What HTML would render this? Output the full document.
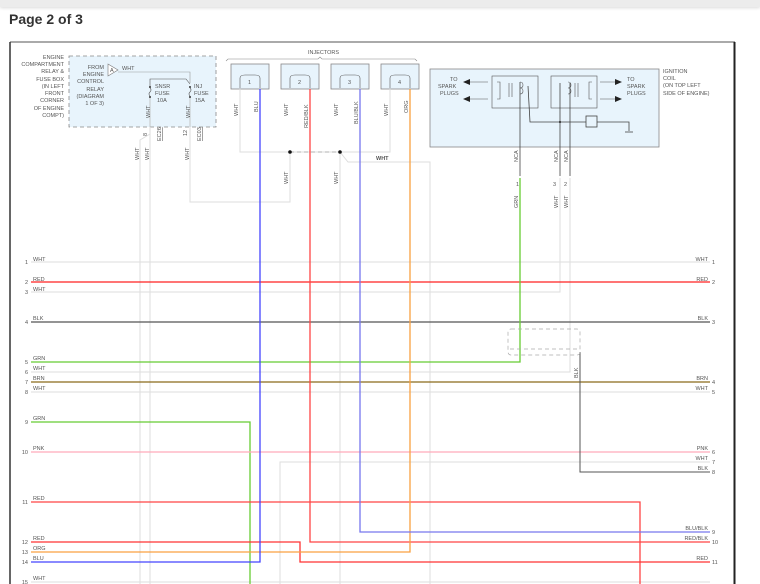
<!DOCTYPE html>
<html><head><meta charset="utf-8"><style>
html,body{margin:0;padding:0;background:#fff;width:760px;height:584px;overflow:hidden}
.top{position:absolute;left:0;top:0;width:760px;height:7px;background:#ececec;box-shadow:0 1px 3px rgba(0,0,0,.15)}
h1{position:absolute;left:9px;top:11px;margin:0;font:bold 14px "Liberation Sans",sans-serif;color:#333}
svg{position:absolute;left:0;top:0}
text{font-family:"Liberation Sans",sans-serif;font-size:5.5px;fill:#555}
</style></head><body>
<div class="top"></div>
<h1>Page 2 of 3</h1>
<svg width="760" height="584" viewBox="0 0 760 584">
<!-- frame -->
<line x1="10" y1="42" x2="735" y2="42" stroke="#555" stroke-width="1"/>
<line x1="10" y1="42" x2="10" y2="584" stroke="#333" stroke-width="1.5"/>
<line x1="734.5" y1="42" x2="734.5" y2="584" stroke="#222" stroke-width="2"/>

<!-- fuse box -->
<rect x="69" y="56" width="147" height="71" fill="#e8f4fc" stroke="#888" stroke-dasharray="4,3" stroke-width="0.8"/>
<g text-anchor="end">
<text x="64" y="59">ENGINE</text><text x="64" y="66">COMPARTMENT</text><text x="64" y="73">RELAY &amp;</text><text x="64" y="81">FUSE BOX</text><text x="64" y="88">(IN LEFT</text><text x="64" y="95">FRONT</text><text x="64" y="102">CORNER</text><text x="64" y="110">OF ENGINE</text><text x="64" y="117">COMPT)</text>
<text x="104" y="69">FROM</text><text x="104" y="76">ENGINE</text><text x="104" y="83">CONTROL</text><text x="104" y="91">RELAY</text><text x="104" y="98">(DIAGRAM</text><text x="104" y="105">1 OF 3)</text>
</g>
<polygon points="108,64 108,76 118,70" fill="#fff" stroke="#777" stroke-width="0.6"/><text x="110" y="72" font-size="5">A</text>
<text x="122" y="70">WHT</text>
<polyline points="118,72 190,72 190,83" fill="none" stroke="#999" stroke-width="0.6"/>
<polyline points="150,88 150,79 186,79 190,84" fill="none" stroke="#555" stroke-width="0.6"/>
<text x="155" y="88">SNSR</text><text x="155" y="95">FUSE</text><text x="157" y="102">10A</text>
<text x="194" y="88">INJ</text><text x="194" y="95">FUSE</text><text x="195" y="102">15A</text>
<circle cx="150" cy="87" r="1" fill="#333"/><circle cx="150" cy="97" r="1" fill="#333"/>
<circle cx="190" cy="87" r="1" fill="#333"/><circle cx="190" cy="97" r="1" fill="#333"/>
<path d="M150,88 q2,2 0,4 q-2,2 0,4" fill="none" stroke="#555" stroke-width="0.6"/>
<path d="M190,88 q2,2 0,4 q-2,2 0,4" fill="none" stroke="#555" stroke-width="0.6"/>
<line x1="150" y1="98" x2="150" y2="127" stroke="#bbb" stroke-width="0.8"/>
<line x1="190" y1="98" x2="190" y2="127" stroke="#bbb" stroke-width="0.8"/>
<text transform="translate(150,118) rotate(-90)">WHT</text>
<text transform="translate(190,118) rotate(-90)">WHT</text>
<text transform="translate(147,136) rotate(-90)">8</text><text transform="translate(187,136) rotate(-90)">12</text>
<text transform="translate(161,141) rotate(-90)" text-decoration="underline">EC26</text>
<text transform="translate(201,141) rotate(-90)" text-decoration="underline">EC03</text>
<text transform="translate(139,160) rotate(-90)">WHT</text>
<text transform="translate(149,160) rotate(-90)">WHT</text>
<text transform="translate(189,160) rotate(-90)">WHT</text>

<!-- injectors -->
<text x="308" y="54">INJECTORS</text>
<path d="M226,61 l2,-2 L318,59 l2,-2 l2,2 L415,59 l2,2" fill="none" stroke="#888" stroke-width="0.6"/>
<g fill="#e8f4fc" stroke="#888" stroke-width="0.8">
<rect x="231" y="64" width="38" height="25"/><rect x="281" y="64" width="38" height="25"/><rect x="331" y="64" width="38" height="25"/><rect x="381" y="64" width="38" height="25"/>
</g>
<g fill="none" stroke="#555" stroke-width="0.6">
<path d="M240,88 v-10 q0,-3 5,-3 h10 q5,0 5,3 v10"/><path d="M290,88 v-10 q0,-3 5,-3 h10 q5,0 5,3 v10"/><path d="M340,88 v-10 q0,-3 5,-3 h10 q5,0 5,3 v10"/><path d="M390,88 v-10 q0,-3 5,-3 h10 q5,0 5,3 v10"/>
</g>
<text x="248" y="84">1</text><text x="298" y="84">2</text><text x="348" y="84">3</text><text x="398" y="84">4</text>
<text transform="translate(238,116) rotate(-90)">WHT</text><text transform="translate(258,112) rotate(-90)">BLU</text>
<text transform="translate(288,116) rotate(-90)">WHT</text><text transform="translate(308,128) rotate(-90)">RED/BLK</text>
<text transform="translate(338,116) rotate(-90)">WHT</text><text transform="translate(358,124) rotate(-90)">BLU/BLK</text>
<text transform="translate(388,116) rotate(-90)">WHT</text><text transform="translate(408,113) rotate(-90)">ORG</text>
<text transform="translate(288,184) rotate(-90)">WHT</text><text transform="translate(338,184) rotate(-90)">WHT</text>
<text x="376" y="160" font-weight="bold" fill="#333">WHT</text>

<!-- coil -->
<rect x="430" y="69" width="229" height="78" fill="#e8f4fc" stroke="#888" stroke-width="0.8"/>
<text x="450" y="81">TO</text><text x="438" y="88">SPARK</text><text x="440" y="95">PLUGS</text>
<text x="627" y="81">TO</text><text x="627" y="88">SPARK</text><text x="627" y="95">PLUGS</text>
<text x="663" y="73">IGNITION</text><text x="663" y="80">COIL</text><text x="663" y="87">(ON TOP LEFT</text><text x="663" y="95">SIDE OF ENGINE)</text>
<g fill="none" stroke="#555" stroke-width="0.6">
<rect x="492" y="76" width="46" height="32"/><rect x="551" y="76" width="46" height="32"/>
<path d="M488,82 H470 M488,99 H470 M600,82 H615 M600,99 H615"/>
<path d="M497,82 h3 v17 h-3"/><path d="M592,82 h-3 v17 h3"/>
<line x1="509" y1="83" x2="509" y2="97"/><line x1="512" y1="83" x2="512" y2="97"/>
<line x1="575" y1="83" x2="575" y2="97"/><line x1="578" y1="83" x2="578" y2="97"/>
<path d="M520,82 q3,0 3,3 q0,3 -3,3 q3,0 3,3 q0,3 -3,3" /><path d="M568,82 q3,0 3,3 q0,3 -3,3 q3,0 3,3 q0,3 -3,3"/>
</g>
<polygon points="463,82 470,79 470,85" fill="#222"/><polygon points="463,99 470,96 470,102" fill="#222"/>
<polygon points="622,82 615,79 615,85" fill="#222"/><polygon points="622,99 615,96 615,102" fill="#222"/>
<g fill="none" stroke="#444" stroke-width="0.8">
<polyline points="520,82 520,176"/><polyline points="528,86 530,122 586,122"/><polyline points="560,83 560,176"/><polyline points="570,83 570,176"/>
<rect x="586" y="116" width="11" height="11"/><polyline points="597,122 629,122 629,131"/>
<line x1="625" y1="132" x2="633" y2="132"/>
</g>
<circle cx="560" cy="122" r="1" fill="#222"/>
<text transform="translate(518,162) rotate(-90)">NCA</text><text transform="translate(558,162) rotate(-90)">NCA</text><text transform="translate(568,162) rotate(-90)">NCA</text>
<text x="516" y="186">1</text><text x="553" y="186">3</text><text x="564" y="186">2</text>
<text transform="translate(518,208) rotate(-90)">GRN</text><text transform="translate(558,208) rotate(-90)">WHT</text><text transform="translate(568,208) rotate(-90)">WHT</text>

<!-- light gray wires -->
<g fill="none" stroke="#ddd" stroke-width="1">
<polyline points="150,127 150,134 140,140 140,584"/>
<polyline points="150,127 150,584"/>
<polyline points="190,127 190,202 290,202 290,152"/>
<polyline points="240,89 240,152 390,152 390,89"/>
<polyline points="340,152 340,584"/>
<polyline points="340,152 348,162 430,162 430,584"/>
<polyline points="280,584 280,462 710,462"/>
<polyline points="560,178 560,292 31,292"/>
<polyline points="570,178 570,372 31,372"/>
<line x1="31" y1="262" x2="710" y2="262"/>
<line x1="31" y1="392" x2="710" y2="392"/>
<line x1="31" y1="582" x2="710" y2="582"/>
</g>
<line x1="290" y1="152" x2="340" y2="152" stroke="#888" stroke-dasharray="4,3" stroke-width="0.6"/>
<circle cx="290" cy="152" r="1.8" fill="#111"/><circle cx="340" cy="152" r="1.8" fill="#111"/>

<!-- colored wires -->
<g fill="none" stroke-width="1.3">
<line x1="31" y1="282" x2="710" y2="282" stroke="#f22"/>
<line x1="31" y1="322" x2="710" y2="322" stroke="#555"/>
<polyline points="520,178 520,362 31,362" stroke="#6c3"/>
<line x1="31" y1="382" x2="710" y2="382" stroke="#8a6a1a"/>
<polyline points="31,422 250,422 250,584" stroke="#6c3"/>
<line x1="31" y1="452" x2="710" y2="452" stroke="#fab"/>
<polyline points="31,502 640,502 640,584" stroke="#f44"/>
<polyline points="310,89 310,542 710,542" stroke="#f44"/>
<polyline points="31,542 300,542 300,562 710,562" stroke="#f33"/>
<polyline points="410,89 410,552 31,552" stroke="#f9a040"/>
<polyline points="260,89 260,562 31,562" stroke="#44f"/>
<polyline points="360,89 360,532 710,532" stroke="#77e"/>
<polyline points="580,352 580,472 710,472" stroke="#555" stroke-width="1"/>
</g>
<rect x="508" y="329" width="72" height="26" rx="3" fill="none" stroke="#aaa" stroke-dasharray="4,3" stroke-width="0.7"/>
<line x1="510" y1="349" x2="578" y2="349" stroke="#aaa" stroke-dasharray="4,3" stroke-width="0.7"/>
<text transform="translate(578,378) rotate(-90)" fill="#333">BLK</text>

<!-- left labels -->
<g>
<text x="33" y="261">WHT</text><text x="33" y="281">RED</text><text x="33" y="291">WHT</text><text x="33" y="320">BLK</text>
<text x="33" y="360">GRN</text><text x="33" y="370">WHT</text><text x="33" y="380">BRN</text><text x="33" y="390">WHT</text>
<text x="33" y="420">GRN</text><text x="33" y="450">PNK</text><text x="33" y="500">RED</text>
<text x="33" y="540">RED</text><text x="33" y="550">ORG</text><text x="33" y="560">BLU</text><text x="33" y="580">WHT</text>
</g>
<g text-anchor="end">
<text x="28" y="264">1</text><text x="28" y="284">2</text><text x="28" y="294">3</text><text x="28" y="324">4</text>
<text x="28" y="364">5</text><text x="28" y="374">6</text><text x="28" y="384">7</text><text x="28" y="394">8</text>
<text x="28" y="424">9</text><text x="28" y="454">10</text><text x="28" y="504">11</text>
<text x="28" y="544">12</text><text x="28" y="554">13</text><text x="28" y="564">14</text><text x="28" y="584">15</text>
<text x="708" y="261">WHT</text><text x="708" y="281">RED</text><text x="708" y="320">BLK</text>
<text x="708" y="380">BRN</text><text x="708" y="390">WHT</text><text x="708" y="450">PNK</text><text x="708" y="460">WHT</text><text x="708" y="470">BLK</text>
<text x="708" y="530">BLU/BLK</text><text x="708" y="540">RED/BLK</text><text x="708" y="560">RED</text>
</g>
<g>
<text x="712" y="264">1</text><text x="712" y="284">2</text><text x="712" y="324">3</text><text x="712" y="384">4</text><text x="712" y="394">5</text>
<text x="712" y="454">6</text><text x="712" y="464">7</text><text x="712" y="474">8</text><text x="712" y="534">9</text><text x="712" y="544">10</text><text x="712" y="564">11</text>
</g>
</svg>
</body></html>
